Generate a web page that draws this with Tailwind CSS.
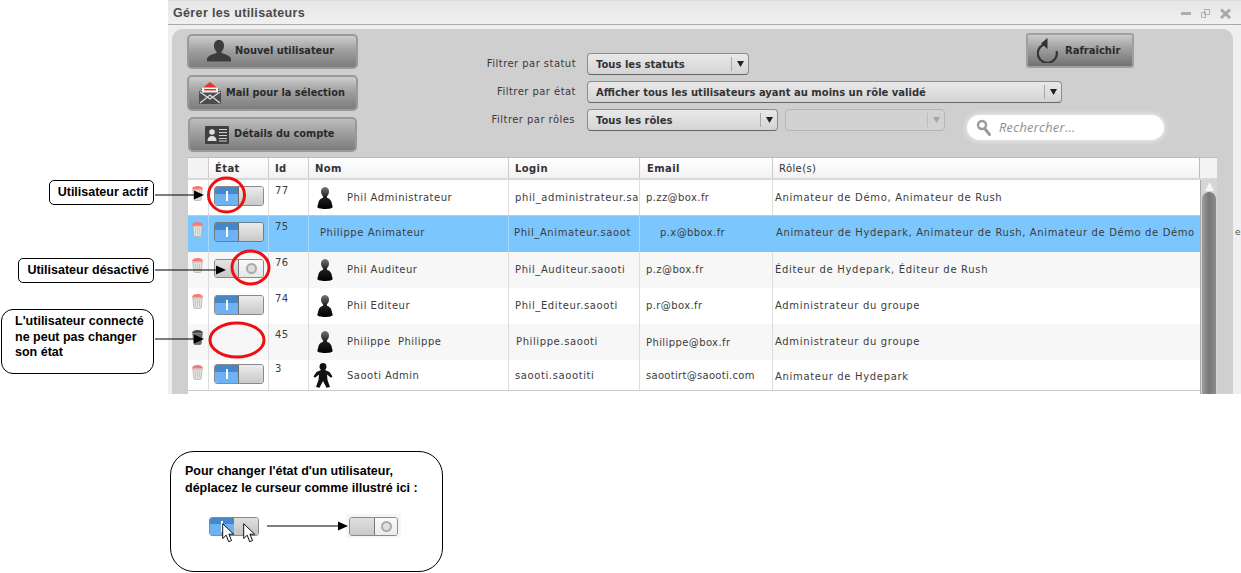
<!DOCTYPE html>
<html lang="fr">
<head>
<meta charset="utf-8">
<title>Gérer les utilisateurs</title>
<script src="https://cdn.jsdelivr.net/npm/@tailwindcss/browser@4"></script>
</head>
<body class="bg-white">
<svg width="0" height="0" class="absolute">
  <defs>
    <linearGradient id="pers" x1="0" y1="0" x2="0" y2="1"><stop offset="0" stop-color="#777"/><stop offset=".45" stop-color="#222"/><stop offset="1" stop-color="#000"/></linearGradient>
    <symbol id="trash" viewBox="0 0 13 16">
      <path d="M1 4.500 C1 2 4 1 6.500 1 S12 2 12 4.500Z" fill="#f57b73"/>
      <path d="M1.800 5h9.400l-1 9.400q-.1 1-1 1H3.800q-.9 0-1-1Z" fill="#e4e2dc" stroke="#a9a9a4" stroke-width=".7"/>
      <path d="M4.500 6.500v7M6.500 6.500v7M8.500 6.500v7" stroke="#c2c2bc" stroke-width=".8"/>
    </symbol>
    <symbol id="person" viewBox="0 0 16 22">
      <path d="M8 0C5.200 0 4 2.200 4 4.600c0 2 .8 3.600 2 4.600v1.600C3.500 11.800 2 13 1.400 15.500L.3 20c0 1 3.500 2 7.700 2s7.700-1 7.700-2l-1.100-4.500C14 13 12.500 11.800 10 10.800V9.200c1.200-1 2-2.600 2-4.600C12 2.200 10.800 0 8 0Z" fill="url(#pers)"/>
    </symbol>
    <symbol id="cursor" viewBox="0 0 12 20">
      <path d="M.7.7v14.800l3.500-3.300 2.500 6.500 2.800-1.200-2.600-6.300h4.800Z" fill="#fff" stroke="#111" stroke-width="1"/>
    </symbol>
  </defs>
</svg>

<div class="relative w-[1241px] h-[573px] overflow-hidden font-['DejaVu_Sans',sans-serif] text-[#333]">

  <!-- Fenêtre -->
  <section class="ml-[168px] w-[1073px] h-[394px] bg-[#efefef] flex flex-col">
    <header class="h-[25px] shrink-0 flex items-center justify-between pl-[5px] pr-[9px] pt-[1px] border-b border-[#aaa] bg-gradient-to-b from-[#e6e6e6] to-[#f0f0f0] border-t border-t-[#ddd]">
      <h1 class="font-['Liberation_Sans',sans-serif] font-bold text-[12.5px] text-[#4a4a4a] tracking-[.35px]">Gérer les utilisateurs</h1>
      <div class="flex items-center gap-[9px] mr-[1px]">
        <svg width="11" height="11" viewBox="0 0 11 11"><rect x="0" y="4" width="10" height="3" fill="#aeaeae"/></svg>
        <svg width="10" height="11" viewBox="0 0 10 11" fill="none" stroke="#b2b2b2"><rect x="3.500" y="1.500" width="5" height="5"/><rect x=".5" y="4.500" width="4" height="5"/></svg>
        <svg width="11" height="11" viewBox="0 0 11 11" stroke="#a8a8a8" stroke-width="3"><path d="M1 1.500l9 8.500M10 1.500L1 10"/></svg>
      </div>
    </header>

    <div class="ml-[4px] mt-[4px] w-[1061px] flex-1 min-h-0 rounded-t-[10px] bg-[#cfcfcf] flex flex-col pl-[16px] pr-[16px]">
      <!-- Barre d'outils -->
      <div class="h-[128px] shrink-0 flex font-medium">
        <div class="w-[170px] shrink-0 pt-[5px] flex flex-col gap-[6px] -ml-[1px]">
          <button class="h-[35px] w-[171px] rounded-[5px] border-2 border-[#999] bg-gradient-to-b from-[#cdcdcd] via-[#9c9c9c] to-[#7d7d7d] flex items-center pl-[17px] gap-[3px] text-[9.8px] font-bold text-[#2a2a2a]">
            <svg width="26" height="22" viewBox="0 0 26 22" class="-mt-[1px] shrink-0"><path d="M13 0c-3.500 0-5 2.700-5 5.700 0 2.500 1 4.500 2.500 5.700v1.600c-4 1.300-8.500 2.700-9.500 5.500v3h24v-3c-1-2.800-5.500-4.200-9.500-5.500v-1.600C17 10.200 18 8.200 18 5.700 18 2.700 16.500 0 13 0Z" fill="#3c3c3c"/></svg>
            <span>Nouvel utilisateur</span>
          </button>
          <button class="h-[36px] w-[171px] rounded-[5px] border-2 border-[#999] bg-gradient-to-b from-[#cdcdcd] via-[#9c9c9c] to-[#7d7d7d] flex items-center pl-[9px] gap-[4px] text-[9.8px] font-bold text-[#2a2a2a]">
            <svg width="24" height="24" viewBox="0 0 24 24" class="shrink-0"><path d="M1 10v13h22V10Z" fill="#4c4c4c"/><path d="M2 22l10-8 10 8M2 11l10 7 10-7" fill="none" stroke="#ddd" stroke-width="1.300"/><path d="M12 1L2 9h20Z" fill="#e8342a"/><rect x="4" y="6.500" width="16" height="5" fill="#f4f4f4"/><rect x="6" y="8" width="12" height="1.500" fill="#e8342a"/></svg>
            <span>Mail pour la sélection</span>
          </button>
          <button class="h-[35px] w-[169px] ml-[1px] rounded-[5px] border-2 border-[#999] bg-gradient-to-b from-[#bdbdbd] via-[#9c9c9c] to-[#7d7d7d] flex items-center pl-[15px] gap-[5px] text-[9.8px] font-bold text-[#2a2a2a]">
            <svg width="24" height="18" viewBox="0 0 24 18" class="shrink-0"><rect width="24" height="18" rx="1" fill="#3f3f3f"/><circle cx="7" cy="6" r="2.800" fill="#ddd"/><path d="M2.500 15c0-3.500 2-5 4.500-5s4.500 1.500 4.500 5Z" fill="#ddd"/><path d="M14 3.500h8M14 6.500h8M14 9.500h8M14 12.500h8M14 15h8" stroke="#cfcfcf" stroke-width="1.100"/></svg>
            <span>Détails du compte</span>
          </button>
        </div>

        <div class="ml-[123px] w-[737px] flex flex-col">
          <div class="flex items-start mt-[24px] h-[28px] relative">
            <label class="w-[96px] text-right text-[10px] tracking-[.45px] text-[#3a3a3a] pt-[3px] shrink-0">Filtrer par statut</label>
            <div class="ml-[11px] w-[162px] h-[22px] rounded-[4px] border border-[#8d8d8d] border-b-[#666] bg-gradient-to-b from-[#e9e9e9] to-[#d4d4d4] flex items-center justify-between text-[10px] font-bold text-[#333] pl-[8px]">
              <span>Tous les statuts</span>
              <span class="w-[17px] border-l border-[#aaa] h-[14px] flex items-center justify-center text-[#222]"><svg width="7" height="6" viewBox="0 0 7 6"><path d="M0 0h7L3.500 6Z" fill="#222"/></svg></span>
            </div>
            <button class="absolute left-[546px] -top-[20px] w-[108px] h-[35px] rounded-[3px] border-2 border-[#a0a0a0] bg-gradient-to-b from-[#cbcbcb] via-[#9a9a9a] to-[#727272] flex items-center pl-[9px] gap-[6px] text-[10px] font-bold text-[#2a2a2a]">
              <svg width="22" height="25" viewBox="0 0 22 25" class="shrink-0"><path d="M7 6.500A9.500 9.500 0 1 0 19.500 13" fill="none" stroke="#333" stroke-width="2.200"/><path d="M10.500 0v11L4 5.500Z" fill="#333"/></svg>
              <span class="-mt-[1px]">Rafraîchir</span>
            </button>
          </div>
          <div class="flex items-start h-[28px]">
            <label class="w-[96px] text-right text-[10px] tracking-[.45px] text-[#3a3a3a] pt-[3px] shrink-0">Filtrer par état</label>
            <div class="ml-[11px] w-[475px] h-[22px] rounded-[4px] border border-[#8d8d8d] border-b-[#666] bg-gradient-to-b from-[#e9e9e9] to-[#d4d4d4] flex items-center justify-between text-[10px] font-bold text-[#333] pl-[8px]">
              <span>Afficher tous les utilisateurs ayant au moins un rôle validé</span>
              <span class="w-[17px] border-l border-[#aaa] h-[14px] flex items-center justify-center"><svg width="7" height="6" viewBox="0 0 7 6"><path d="M0 0h7L3.500 6Z" fill="#222"/></svg></span>
            </div>
          </div>
          <div class="flex items-start h-[28px]">
            <label class="w-[95px] text-right text-[10px] tracking-[.45px] text-[#3a3a3a] pt-[3px] shrink-0">Filtrer par rôles</label>
            <div class="ml-[12px] w-[191px] h-[22px] rounded-[4px] border border-[#8d8d8d] border-b-[#666] bg-gradient-to-b from-[#e9e9e9] to-[#d4d4d4] flex items-center justify-between text-[10px] font-bold text-[#333] pl-[8px]">
              <span>Tous les rôles</span>
              <span class="w-[17px] border-l border-[#aaa] h-[14px] flex items-center justify-center"><svg width="7" height="6" viewBox="0 0 7 6"><path d="M0 0h7L3.500 6Z" fill="#222"/></svg></span>
            </div>
            <div class="ml-[7px] w-[160px] h-[22px] rounded-[4px] border border-[#b4b4b4] bg-[#d2d2d2] flex items-center justify-end">
              <span class="w-[17px] border-l border-[#bbb] h-[14px] flex items-center justify-center"><svg width="7" height="6" viewBox="0 0 7 6"><path d="M0 0h7L3.500 6Z" fill="#a5a5a5"/></svg></span>
            </div>
            <div class="ml-[22px] mt-[6px] w-[197px] h-[25px] rounded-full bg-white shadow-[0_0_4px_2px_rgba(255,255,255,.45)] flex items-center pl-[9px] gap-[7px] font-['Open_Sans',sans-serif] italic font-normal text-[12.8px] text-[#8f8f8f]">
              <svg width="16" height="17" viewBox="0 0 16 17" class="shrink-0"><circle cx="6" cy="6" r="4" fill="#fff" stroke="#9a9a9a" stroke-width="2.400"/><path d="M9 10l4.500 5.500" stroke="#9a9a9a" stroke-width="3" stroke-linecap="round"/></svg>
              <span class="tracking-[.3px]">Rechercher...</span>
            </div>
          </div>
        </div>
      </div>

      <!-- Tableau -->
      <div class="w-[1029px] flex-1 min-h-0 bg-white flex flex-col text-[10px] tracking-[.4px] text-[#3c3c3c]">
        <div class="h-[23px] shrink-0 grid grid-cols-[21px_60px_40px_200px_131px_133px_427px_17px] border-t border-[#bbb] border-b-2 border-b-[#d8d8d8] bg-gradient-to-b from-white to-[#f2f2f2] font-bold text-[#333]">
          <div class="border-r border-[#ccc] bg-[#f3f3f3]"></div>
          <div class="border-r border-[#ccc] pl-[6px] pt-[1px] flex items-center">État</div>
          <div class="border-r border-[#ccc] pl-[6px] pt-[1px] flex items-center">Id</div>
          <div class="border-r border-[#ccc] pl-[6px] pt-[1px] flex items-center">Nom</div>
          <div class="border-r border-[#ccc] pl-[6px] pt-[1px] flex items-center">Login</div>
          <div class="border-r border-[#ccc] pl-[7px] pt-[1px] flex items-center">Email</div>
          <div class="border-r border-[#bbb] pl-[6px] flex items-center font-medium">Rôle(s)</div>
          <div class="bg-[#f3f3f3]"></div>
        </div>
        <div class="flex-1 min-h-0 flex overflow-hidden">
          <div class="w-[1012px] shrink-0 flex flex-col">
            <!-- 77 -->
            <div class="h-[35px] grid grid-cols-[21px_60px_40px_200px_131px_133px_427px] bg-white">
              <div class="border-r border-[#ddd] pl-[3px] pt-[5px]"><svg width="13" height="16"><use href="#trash"/></svg></div>
              <div class="border-r border-[#ddd] pl-[5px] pt-[6px]">
                <div class="w-[50px] h-[20px] rounded-[3px] border border-[#8a8a8a] flex overflow-hidden"><div class="w-[24px] border-r border-[#6a6a6a] bg-[linear-gradient(#4687c9_0_38%,#6eb2f3_38%)] flex items-center justify-center"><i class="block w-[2px] h-[10px] bg-white"></i></div><div class="flex-1 bg-gradient-to-b from-[#ececec] to-[#c9c9c9]"></div></div>
              </div>
              <div class="border-r border-[#ddd] pl-[6px] pt-[3px]">77</div>
              <div class="border-r border-[#ddd] flex items-center pl-[8px] gap-[14px] tracking-[.5px]"><svg width="16" height="22"><use href="#person"/></svg><span>Phil Administrateur</span></div>
              <div class="border-r border-[#ddd] flex items-center pl-[6px] overflow-hidden whitespace-nowrap tracking-[.6px]">phil_administrateur.sa</div>
              <div class="flex items-center pl-[6px]">p.zz@box.fr</div>
              <div class="border-l border-[#ddd] flex items-center pl-[2px] -ml-[1px] tracking-[.68px]">Animateur de Démo, Animateur de Rush</div>
            </div>
            <!-- 75 -->
            <div class="h-[37px] grid grid-cols-[21px_60px_40px_200px_131px_133px_427px] bg-[#7cc6fe] border-t border-[#9cd4fe]">
              <div class="border-r border-[#a8d8fc] pl-[3px] pt-[5px]"><svg width="13" height="16"><use href="#trash"/></svg></div>
              <div class="border-r border-[#a8d8fc] pl-[5px] pt-[6px]">
                <div class="w-[50px] h-[20px] rounded-[3px] border border-[#6f7f8a] flex overflow-hidden"><div class="w-[24px] border-r border-[#6a6a6a] bg-[linear-gradient(#4687c9_0_38%,#6eb2f3_38%)] flex items-center justify-center"><i class="block w-[2px] h-[10px] bg-white"></i></div><div class="flex-1 bg-gradient-to-b from-[#ececec] to-[#c9c9c9]"></div></div>
              </div>
              <div class="border-r border-[#a8d8fc] pl-[6px] pt-[3px]">75</div>
              <div class="border-r border-[#a8d8fc] flex items-center pl-[11px] pb-[4px] tracking-[.55px]">Philippe Animateur</div>
              <div class="border-r border-[#a8d8fc] flex items-center pl-[5px] pb-[4px] overflow-hidden whitespace-nowrap tracking-[.6px]">Phil_Animateur.saoot</div>
              <div class="flex items-center pl-[20px] pb-[4px]">p.x@bbox.fr</div>
              <div class="flex items-center pl-[3px] pb-[4px] whitespace-nowrap overflow-hidden tracking-[.62px]">Animateur de Hydepark, Animateur de Rush, Animateur de Démo de Démo</div>
            </div>
            <!-- 76 -->
            <div class="h-[36px] grid grid-cols-[21px_60px_40px_200px_131px_133px_427px] bg-[#f7f7f7]">
              <div class="border-r border-[#ddd] pl-[3px] pt-[5px]"><svg width="13" height="16"><use href="#trash"/></svg></div>
              <div class="border-r border-[#ddd] pl-[5px] pt-[7px]">
                <div class="w-[50px] h-[19px] rounded-[3px] border border-[#8a8a8a] flex overflow-hidden"><div class="w-[24px] border-r border-[#777] bg-gradient-to-b from-[#e4e4e4] to-[#c9c9c9]"></div><div class="flex-1 bg-gradient-to-b from-[#fafafa] to-[#e6e6e6] flex items-center justify-center"><i class="block w-[11px] h-[11px] rounded-full border-2 border-[#aaa] bg-[#ddd]"></i></div></div>
              </div>
              <div class="border-r border-[#ddd] pl-[6px] pt-[3px]">76</div>
              <div class="border-r border-[#ddd] flex items-center pl-[8px] gap-[14px] pb-[2px] tracking-[.5px]"><svg width="16" height="22" class="mt-[2px]"><use href="#person"/></svg><span>Phil Auditeur</span></div>
              <div class="border-r border-[#ddd] flex items-center pl-[6px] pb-[2px] tracking-[.6px]">Phil_Auditeur.saooti</div>
              <div class="flex items-center pl-[6px] pb-[2px]">p.z@box.fr</div>
              <div class="border-l border-[#ddd] flex items-center pl-[2px] -ml-[1px] pb-[2px] tracking-[.68px]">Éditeur de Hydepark, Éditeur de Rush</div>
            </div>
            <!-- 74 -->
            <div class="h-[36px] grid grid-cols-[21px_60px_40px_200px_131px_133px_427px] bg-white">
              <div class="border-r border-[#ddd] pl-[3px] pt-[5px]"><svg width="13" height="16"><use href="#trash"/></svg></div>
              <div class="border-r border-[#ddd] pl-[5px] pt-[7px]">
                <div class="w-[50px] h-[20px] rounded-[3px] border border-[#8a8a8a] flex overflow-hidden"><div class="w-[24px] border-r border-[#6a6a6a] bg-[linear-gradient(#4687c9_0_38%,#6eb2f3_38%)] flex items-center justify-center"><i class="block w-[2px] h-[10px] bg-white"></i></div><div class="flex-1 bg-gradient-to-b from-[#ececec] to-[#c9c9c9]"></div></div>
              </div>
              <div class="border-r border-[#ddd] pl-[6px] pt-[3px]">74</div>
              <div class="border-r border-[#ddd] flex items-center pl-[8px] gap-[14px] pb-[2px] tracking-[.5px]"><svg width="16" height="22" class="mt-[2px]"><use href="#person"/></svg><span>Phil Editeur</span></div>
              <div class="border-r border-[#ddd] flex items-center pl-[6px] pb-[2px] tracking-[.6px]">Phil_Editeur.saooti</div>
              <div class="flex items-center pl-[6px] pb-[2px]">p.r@box.fr</div>
              <div class="border-l border-[#ddd] flex items-center pl-[2px] -ml-[1px] pb-[2px] tracking-[.68px]">Administrateur du groupe</div>
            </div>
            <!-- 45 -->
            <div class="h-[36px] grid grid-cols-[21px_60px_40px_200px_131px_133px_427px] bg-[#f7f7f7]">
              <div class="border-r border-[#ddd] pl-[3px] pt-[5px]"><svg width="13" height="16" class="grayscale brightness-50"><use href="#trash"/></svg></div>
              <div class="border-r border-[#ddd]"></div>
              <div class="border-r border-[#ddd] pl-[6px] pt-[3px]">45</div>
              <div class="border-r border-[#ddd] flex items-center pl-[8px] gap-[14px] pb-[2px] whitespace-pre tracking-[.5px]"><svg width="16" height="22" class="mt-[2px]"><use href="#person"/></svg><span>Philippe  Philippe</span></div>
              <div class="border-r border-[#ddd] flex items-center pl-[7px] pb-[2px] tracking-[.6px]">Philippe.saooti</div>
              <div class="flex items-center pl-[6px] pt-[1px]">Philippe@box.fr</div>
              <div class="border-l border-[#ddd] flex items-center pl-[2px] -ml-[1px] pb-[2px] tracking-[.68px]">Administrateur du groupe</div>
            </div>
            <!-- 3 -->
            <div class="h-[31px] grid grid-cols-[21px_60px_40px_200px_131px_133px_427px] bg-white border-b border-[#ccc]">
              <div class="border-r border-[#ddd] pl-[3px] pt-[4px]"><svg width="13" height="16"><use href="#trash"/></svg></div>
              <div class="border-r border-[#ddd] pl-[5px] pt-[4px]">
                <div class="w-[50px] h-[20px] rounded-[3px] border border-[#8a8a8a] flex overflow-hidden"><div class="w-[24px] border-r border-[#6a6a6a] bg-[linear-gradient(#4687c9_0_38%,#6eb2f3_38%)] flex items-center justify-center"><i class="block w-[2px] h-[10px] bg-white"></i></div><div class="flex-1 bg-gradient-to-b from-[#ececec] to-[#c9c9c9]"></div></div>
              </div>
              <div class="border-r border-[#ddd] pl-[6px] pt-[1px]">3</div>
              <div class="border-r border-[#ddd] flex items-center pl-[4px] gap-[14px] tracking-[.5px]">
                <svg width="20" height="25" viewBox="0 0 20 25" class="shrink-0"><path d="M10 0c-2.300 0-3.500 1.700-3.500 3.800 0 1.400.6 2.500 1.500 3.200L3.500 9 .5 13.500l1.500 1.200 4-3.200-.5 5.500L3 24l3.500.8L10 18l3.500 6.800L17 24l-2.500-7-.5-5.500 4 3.200 1.500-1.200L16.500 9 12 7c.9-.7 1.500-1.800 1.500-3.200C13.500 1.700 12.300 0 10 0Z" fill="#111"/></svg>
                <span>Saooti Admin</span>
              </div>
              <div class="border-r border-[#ddd] flex items-center pl-[6px] tracking-[.6px]">saooti.saootiti</div>
              <div class="flex items-center pl-[6px] tracking-[.3px]">saootirt@saooti.com</div>
              <div class="border-l border-[#ddd] flex items-center pl-[2px] pt-[3px] -ml-[1px] tracking-[.68px]">Animateur de Hydepark</div>
            </div>
          </div>
          <!-- Ascenseur -->
          <div class="w-[17px] shrink-0 bg-[#d6d6d6] border-l border-[#aaa] flex flex-col items-center">
            <svg width="9" height="9" viewBox="0 0 9 9" class="mt-[2px]"><path d="M4.500 0L9 9H0Z" fill="#f5f5f5"/></svg>
            <div class="mt-[1px] w-[14px] flex-1 rounded-t-[7px] bg-gradient-to-r from-[#9d9d9d] via-[#777] to-[#8c8c8c]"></div>
          </div>
        </div>
      </div>
    </div>
  </section>
  <span class="absolute left-[1235px] top-[226px] text-[9px] text-[#555]">e</span>

  <!-- Annotations -->
  <div class="absolute left-[49px] top-[180px] w-[105px] h-[25px] rounded-[5px] border border-black bg-white flex items-center justify-end pr-[5px] font-['Liberation_Sans',sans-serif] font-bold text-[12.5px] text-black">Utilisateur actif</div>
  <div class="absolute left-[18px] top-[258px] w-[136px] h-[25px] rounded-[5px] border border-black bg-white flex items-center justify-end pr-[4px] font-['Liberation_Sans',sans-serif] font-bold text-[12.5px] text-black">Utilisateur désactivé</div>
  <div class="absolute left-[1px] top-[309px] w-[153px] h-[65px] rounded-[12px] border border-black bg-white pl-[13px] pt-[4px] font-['Liberation_Sans',sans-serif] font-bold text-[12.5px] leading-[15.5px] text-black">L'utilisateur connecté<br>ne peut pas changer<br>son état</div>

  <!-- Encadré d'aide -->
  <aside class="absolute left-[170px] top-[451px] w-[273px] h-[121px] rounded-[24px] border border-black bg-white pl-[14px] pt-[11px] font-['Liberation_Sans',sans-serif] font-bold text-[12.5px] leading-[17px] text-black">
    <p>Pour changer l'état d'un utilisateur,<br>déplacez le curseur comme illustré ici :</p>
    <div class="relative mt-[17px] flex items-center">
      <div class="ml-[24px] w-[50px] h-[19px] rounded-[3px] border border-[#8a8a8a] flex overflow-hidden"><div class="w-[24px] bg-[linear-gradient(#4687c9_0_38%,#6eb2f3_38%)] flex items-center justify-center"><i class="block w-[2px] h-[11px] bg-white"></i></div><div class="flex-1 bg-gradient-to-b from-[#dedede] to-[#c4c4c4]"></div></div>
      <svg width="12" height="20" class="absolute left-[37px] top-[9px]"><use href="#cursor"/></svg>
      <svg width="12" height="20" class="absolute left-[58px] top-[9px]"><use href="#cursor"/></svg>
      <div class="ml-[87px] w-[55px] h-[24px] bg-[#f6f6f6] flex items-center justify-center">
        <div class="w-[49px] h-[19px] rounded-[3px] border border-[#8a8a8a] flex overflow-hidden"><div class="w-[25px] border-r border-[#777] bg-gradient-to-b from-[#e0e0e0] to-[#c9c9c9]"></div><div class="flex-1 bg-gradient-to-b from-[#fafafa] to-[#ececec] flex items-center justify-center"><i class="block w-[11px] h-[11px] rounded-full border-2 border-[#aaa] bg-[#e0e0e0]"></i></div></div>
      </div>
    </div>
  </aside>

  <svg class="absolute inset-0 pointer-events-none" width="1241" height="573" viewBox="0 0 1241 573" fill="none">
    <g stroke="#ee0f12" stroke-width="3">
      <ellipse cx="226.500" cy="195" rx="18" ry="17"/>
      <ellipse cx="250.500" cy="267.500" rx="18.500" ry="16.500"/>
      <ellipse cx="237" cy="340" rx="27" ry="17"/>
    </g>
    <g stroke="#000" stroke-width="1.200">
      <path d="M155 195h40M155 270h62M155 339h40M267 526h72"/>
    </g>
    <g fill="#000">
      <path d="M194 190.500l10 4.500-10 4.500Z"/>
      <path d="M216 265.500l10 4.500-10 4.500Z"/>
      <path d="M194 334.500l10 4.500-10 4.500Z"/>
      <path d="M338 521.500l10 4.500-10 4.500Z"/>
    </g>
  </svg>
</div>
</body>
</html>
